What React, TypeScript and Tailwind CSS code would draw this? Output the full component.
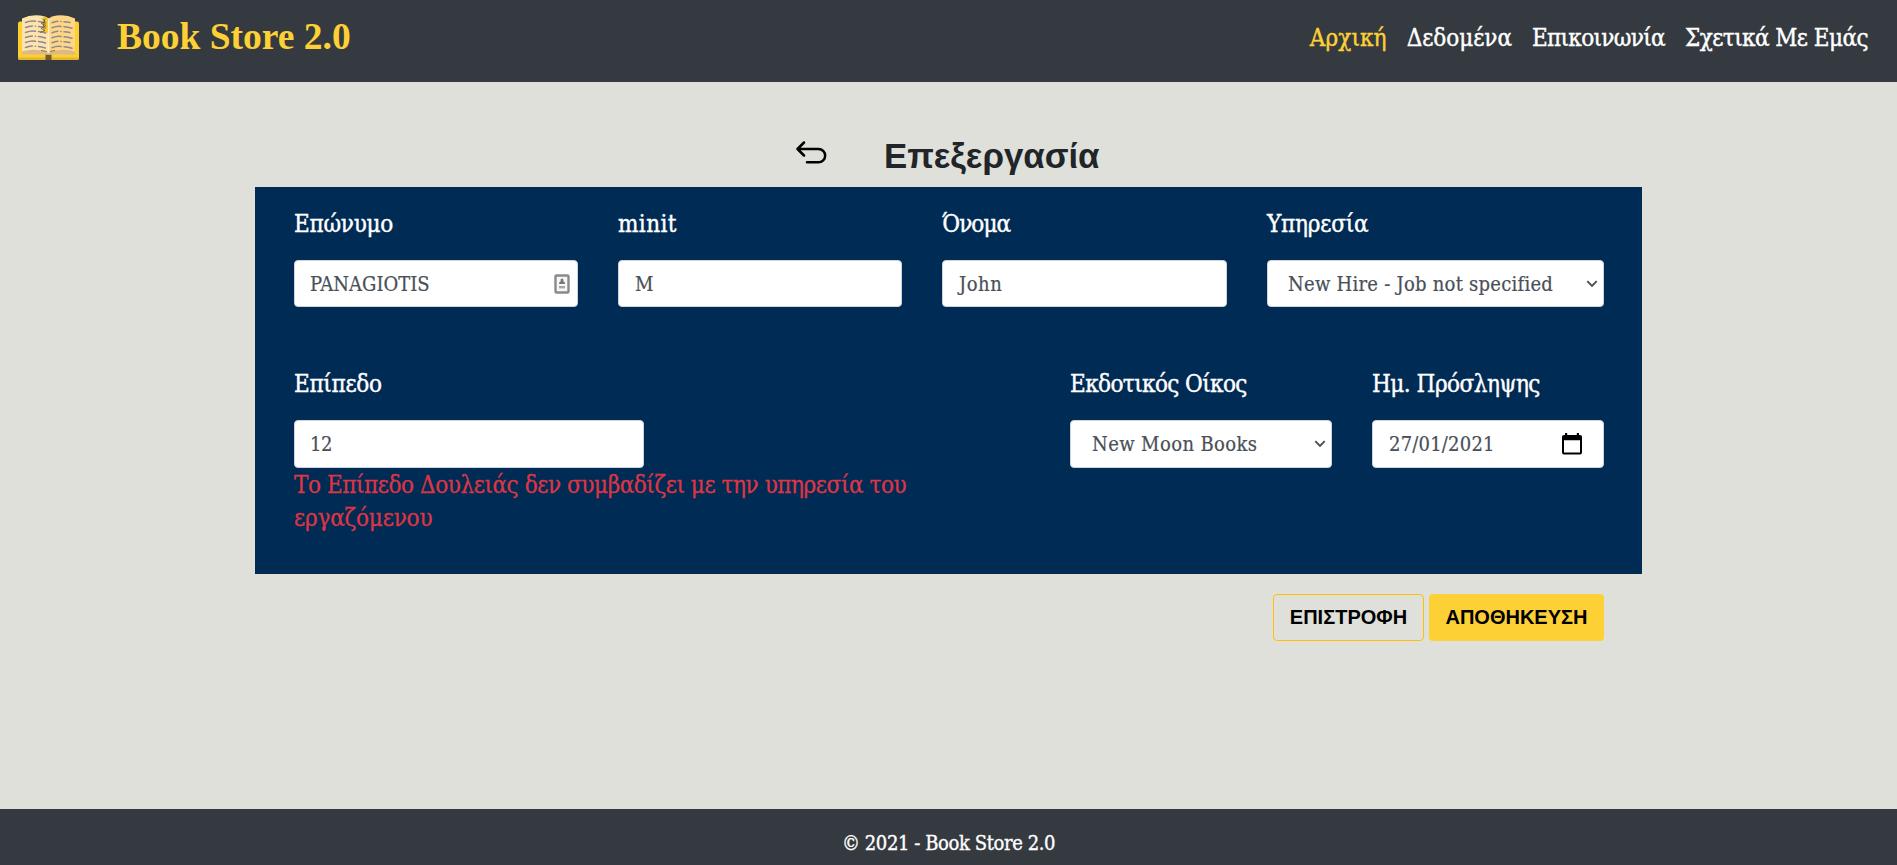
import type { ReactNode } from 'react';

const inputBox =
  'flex items-center rounded-[4px] border border-[#ced4da] bg-white text-[20px] leading-[30px] text-[#495057] [-webkit-text-stroke:0.2px]';

function BookLogo() {
  const rows = [20, 25, 30, 35, 40, 45];
  return (
    <svg width="61" height="45" viewBox="18 14.500 61 45" aria-hidden="true">
      <rect x="18" y="21" width="61" height="38.500" rx="2" fill="#fdd02f" />
      <path d="M18 57h61v.5a2 2 0 0 1-2 2H20a2 2 0 0 1-2-2z" fill="#e3b431" />
      <rect x="45.500" y="54" width="6" height="5.500" fill="#6b5a36" />
      <path d="M22 53V18q11-5.500 23-2l3.500 2v36q-12-4-26.500-1z" fill="#ffe3ae" />
      <path d="M75 53V18q-11-5.500-23-2l-3.500 2v36q12-4 26.500-1z" fill="#ffd685" />
      <path d="M22 54v-3q14-4 26.500 1.500Q61 47 75 51v3z" fill="#dcb98c" />
      <path d="M43 16q4 0 5.500 2v15q-2-2-5.500 0z" fill="#f2c62c" />
      <path d="M48.500 18v34" stroke="#fff0cf" strokeWidth="1.200" />
      {rows.map((y, i) => (
        <g key={y} fill="none" stroke="#8c8a93" strokeWidth="1.500" strokeLinecap="round">
          <path
            d={`M25.500 ${y + 2}q5-2 10-1.300m3 .3q3 .3 7 1.500`}
            strokeDasharray={i % 2 ? '7 3' : '11 3'}
          />
          <path
            d={`M52 ${y + 2.3}q5-2 9-1.300m3 .2q4 .2 8 1.500`}
            strokeDasharray={i % 2 ? '11 3' : '6 3'}
          />
        </g>
      ))}
      <path
        d="M42 18l3 3-4 2 5 2-5 3 4 2-5 2M45 18l-2 9M41 50l6 1M50 51l5-1"
        fill="none"
        stroke="#6d5620"
        strokeWidth=".8"
      />
    </svg>
  );
}

function ContactIcon() {
  return (
    <svg width="16" height="20" viewBox="0 0 16 20" aria-hidden="true">
      <rect x="1.500" y="1.500" width="13" height="17" rx="1" fill="#f6f6f6" stroke="#8a8a8a" strokeWidth="2.400" />
      <circle cx="8" cy="6" r="1.500" fill="#777" />
      <path d="M5 10q0-3 3-3t3 3z" fill="#777" />
      <path d="M5 13.200h6" stroke="#a8a8a8" strokeWidth="2.400" />
    </svg>
  );
}

function Chevron() {
  return (
    <svg width="12" height="8" viewBox="0 0 12 8" fill="none" aria-hidden="true">
      <path d="M1.300 1.200 6 6l4.700-4.800" stroke="#495057" strokeWidth="1.900" />
    </svg>
  );
}

function CalendarIcon() {
  return (
    <svg width="20" height="22" viewBox="0 0 20 22" className="mb-[1px]" aria-hidden="true">
      <path
        fillRule="evenodd"
        fill="#000"
        d="M3 0h2.200v2h9.600V0H17v2h1a2 2 0 0 1 2 2v15.500a2 2 0 0 1-2 2H2a2 2 0 0 1-2-2V4a2 2 0 0 1 2-2h1zM2 7.200v12.300h16V7.200z"
      />
    </svg>
  );
}

function BackIcon() {
  return (
    <svg width="31" height="23" viewBox="0 0 31 23" fill="none" aria-hidden="true">
      <path
        d="M8 1.500 1.500 8 8 14.500M1.500 8H22.500a6.500 6.500 0 0 1 0 13.300H11"
        stroke="#000"
        strokeWidth="2.500"
        strokeLinecap="round"
        strokeLinejoin="round"
      />
    </svg>
  );
}

function Field({ label, tracking, className, children }: {
  label: string;
  tracking: string;
  className: string;
  children: ReactNode;
}) {
  return (
    <div className={className}>
      <div className={`mb-[19px] h-[33px] whitespace-nowrap text-[24px] leading-[33px] text-white [-webkit-text-stroke:0.4px] ${tracking}`}>{label}</div>
      {children}
    </div>
  );
}

export default function App() {
  return (
    <div className="flex h-[865px] w-full flex-col overflow-hidden bg-[#dfe0da] font-['DejaVu_Serif_Condensed','DejaVu_Serif',serif] [font-stretch:condensed]">
      <header className="flex h-[82px] shrink-0 items-start justify-between bg-[#343a40] pl-[18px] pr-[29px]">
        <div className="flex items-start">
          <div className="pt-[15px]"><BookLogo /></div>
          <div className="ml-[38px] mt-[15px] font-['Liberation_Serif',serif] text-[37.500px] font-bold leading-[44px] text-[#fdd035]">
            Book Store 2.0
          </div>
        </div>
        <nav className="mt-[21px] flex gap-[20px] whitespace-nowrap text-[24px] leading-[34px] text-white [-webkit-text-stroke:0.4px]">
          <a className="tracking-[0.1px] text-[#fdd035]">Αρχική</a>
          <a className="tracking-[-0.05px]">Δεδομένα</a>
          <a className="tracking-[-0.66px]">Επικοινωνία</a>
          <a className="tracking-[-0.56px]">Σχετικά Με Εμάς</a>
        </nav>
      </header>

      <main className="flex flex-1 flex-col pl-[255px] pr-[255px]">
        <div className="flex h-[105px] items-start pl-[541px]">
          <div className="pt-[59px]"><BackIcon /></div>
          <h1 className="ml-[57px] mt-[53px] whitespace-nowrap font-['Liberation_Sans',sans-serif] text-[34.800px] font-bold leading-[42px] text-[#212529]">
            Επεξεργασία
          </h1>
        </div>

        <section className="h-[387px] bg-[#002b54] pl-[39px] pt-[21px]">
          <div className="flex gap-[40px]">
            <Field label="Επώνυμο" tracking="tracking-[-0.25px]" className="w-[284px]">
              <div className={`${inputBox} h-[47px] justify-between pl-[15px] pr-[7px]`}>
                PANAGIOTIS
                <ContactIcon />
              </div>
            </Field>
            <Field label="minit" tracking="tracking-[0.4px]" className="w-[284px]">
              <div className={`${inputBox} h-[47px] pl-[16px]`}>M</div>
            </Field>
            <Field label="Όνομα" tracking="tracking-[-0.9px]" className="w-[285px]">
              <div className={`${inputBox} h-[47px] pl-[16px] tracking-[0.5px]`}>John</div>
            </Field>
            <Field label="Υπηρεσία" tracking="tracking-[-0.2px]" className="w-[337px]">
              <div className={`${inputBox} h-[47px] justify-between pl-[20px] pr-[5px] tracking-[0.25px]`}>
                New Hire - Job not specified
                <Chevron />
              </div>
            </Field>
          </div>

          <div className="mt-[61px] flex">
            <Field label="Επίπεδο" tracking="tracking-[-0.3px]" className="w-[776px]">
              <div className={`${inputBox} h-[48px] w-[350px] pl-[15px] tracking-[-0.5px]`}>12</div>
              <div className="mt-[1px] whitespace-nowrap text-[24px] leading-[33px] tracking-[-0.44px] text-[#dc3545] [-webkit-text-stroke:0.3px]">
                Το Επίπεδο Δουλειάς δεν συμβαδίζει με την υπηρεσία του
                <br />
                <span className="tracking-[-0.2px]">εργαζόμενου</span>
              </div>
            </Field>
            <Field label="Εκδοτικός Οίκος" tracking="tracking-[-0.6px]" className="w-[262px]">
              <div className={`${inputBox} h-[48px] justify-between pl-[21px] pr-[5px] tracking-[0.4px]`}>
                New Moon Books
                <Chevron />
              </div>
            </Field>
            <Field label="Ημ. Πρόσληψης" tracking="tracking-[-0.5px]" className="ml-[40px] w-[232px]">
              <div className={`${inputBox} h-[48px] justify-between pl-[16px] pr-[21px] tracking-[0.2px]`}>
                27/01/2021
                <CalendarIcon />
              </div>
            </Field>
          </div>
        </section>

        <div className="mt-[20px] flex justify-end gap-[5px] pr-[38px] font-['Liberation_Sans',sans-serif] text-[20px] font-bold leading-[30px] text-black">
          <button className="h-[47px] w-[151px] whitespace-nowrap rounded-[4px] border border-[#ffc107] pb-[2px]">ΕΠΙΣΤΡΟΦΗ</button>
          <button className="h-[47px] w-[175px] whitespace-nowrap rounded-[4px] bg-[#fdd035] pb-[2px]">ΑΠΟΘΗΚΕΥΣΗ</button>
        </div>
      </main>

      <footer className="flex h-[56px] shrink-0 justify-center bg-[#343a40] pt-[19px] text-[20px] leading-[30px] tracking-[-0.4px] text-white [-webkit-text-stroke:0.35px]">
        © 2021 - Book Store 2.0
      </footer>
    </div>
  );
}
